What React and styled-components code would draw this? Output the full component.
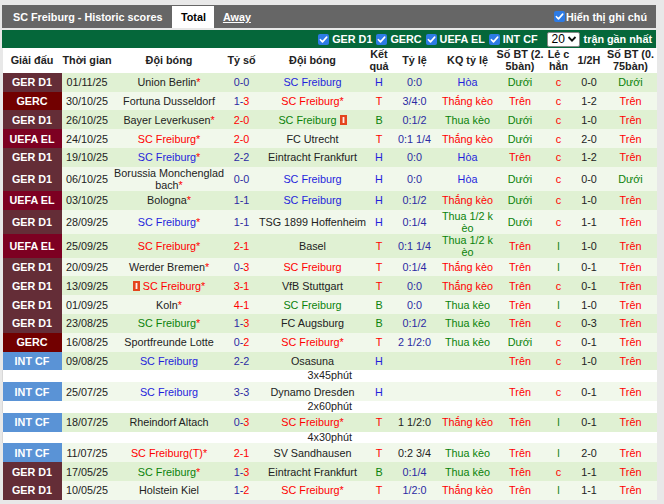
import React from 'react';
import styled, { createGlobalStyle } from 'styled-components';

const Global = createGlobalStyle`
  html, body { margin: 0; padding: 0; background: #e8e8e8; }
  body { font-family: "Liberation Sans", Arial, sans-serif; font-size: 10.8px; color: #222; }
`;

const C = {
  blue: '#1f1fdc',
  red: '#ff0000',
  green: '#0a820a',
  navy: '#2b2ba3',
  black: '#222222',
};

const LEAGUE_BG = {
  'GER D1': '#642d37',
  GERC: '#720000',
  'UEFA EL': '#7d0022',
  'INT CF': '#5a93d6',
};

const Page = styled.div`
  width: 654px;
  padding: 5px 0 0 2px;
`;

const TitleBar = styled.div`
  display: flex;
  align-items: stretch;
  height: 23px;
  background: #666666;
  color: #fff;
  font-weight: bold;
`;

const Title = styled.div`
  display: flex;
  align-items: center;
  padding: 0 10px 0 11px;
`;

const Tab = styled.div`
  display: flex;
  align-items: center;
  margin-top: 1px;
  padding: 0 8.5px;
  background: ${(p) => (p.$active ? '#fff' : 'transparent')};
  color: ${(p) => (p.$active ? '#000' : '#fff')};
  text-decoration: ${(p) => (p.$active ? 'none' : 'underline')};
`;

const Notes = styled.label`
  margin-left: auto;
  display: flex;
  align-items: center;
  gap: 1px;
  padding-right: 9px;
`;

const Box = styled.span`
  display: inline-flex;
  width: 11px;
  height: 11px;
  border-radius: 2px;
  background: #2d7be5;
  align-items: center;
  justify-content: center;
  flex: none;
`;

const Check = () => (
  <Box>
    <svg width="11" height="11" viewBox="0 0 11 11">
      <path d="M2.4 5.7 L4.5 7.9 L8.7 3.1" fill="none" stroke="#fff" strokeWidth="1.6" strokeLinecap="round" strokeLinejoin="round" />
    </svg>
  </Box>
);

const GreenBar = styled.div`
  margin-top: 2px;
  height: 18px;
  background: #05673a;
  display: flex;
  justify-content: flex-end;
  align-items: center;
  padding-right: 4px;
  color: #fff;
  font-weight: bold;
`;

const Filter = styled.span`
  display: flex;
  align-items: center;
  gap: 3px;
  margin-left: 4px;
`;

const Select = styled.span`
  margin: 0 4px 0 9px;
  width: 33px;
  height: 15px;
  box-sizing: border-box;
  background: #fff;
  border: 1px solid #888;
  border-radius: 2px;
  display: flex;
  align-items: center;
  justify-content: space-between;
  padding: 0 2px 0 4px;
  color: #000;
  font-weight: normal;
  font-size: 12px;
`;

const Table = styled.table`
  width: 654px;
  border-collapse: collapse;
  table-layout: fixed;
`;

const Th = styled.th`
  background: #fff;
  color: #222;
  font-weight: bold;
  line-height: 12.4px;
  padding: 0;
  text-align: center;
  vertical-align: middle;
  height: 24.7px;
`;

const Row = styled.tr`
  height: 18.8px;
  background: ${(p) => (p.$odd ? '#e0f1d3' : '#f1f8eb')};
`;

const Td = styled.td`
  padding: 0;
  text-align: center;
  vertical-align: middle;
  line-height: 12px;
  color: ${(p) => p.$c || C.black};
  white-space: nowrap;
`;

const League = styled.td`
  padding: 0;
  text-align: center;
  vertical-align: middle;
  line-height: 12px;
  color: #fff;
  font-weight: bold;
  background: ${(p) => LEAGUE_BG[p.$lg]};
`;

const ExtraRow = styled.tr`
  height: 11.8px;
  background: #fff;
`;

const ExtraCell = styled.td`
  padding: 0;
  text-align: center;
  line-height: 11.8px;
  color: #222;
  border-left: 1px solid #d8d8d8;
`;

const Star = styled.span`
  color: ${C.red};
`;

const Card = styled.svg`
  display: inline-block;
  vertical-align: -1px;
  margin: ${(p) => (p.$before ? '0 3px 0 0' : '0 0 0 3px')};
`;

const RedCard = ({ before }) => (
  <Card $before={before} width="7" height="10" viewBox="0 0 7 10">
    <rect x="0" y="0" width="7" height="10" fill="#e4451c" />
    <rect x="2.6" y="2" width="1.8" height="6" fill="#fff" opacity="0.9" />
  </Card>
);

const Team = ({ t }) => (
  <>
    {t.card === 'before' && <RedCard before />}
    <span style={{ color: t.c || C.black }}>{t.n}</span>
    {t.br && (
      <>
        <br />
        <span style={{ color: t.c || C.black }}>{t.br}</span>
      </>
    )}
    {t.s && <Star>*</Star>}
    {t.card === 'after' && <RedCard />}
  </>
);

const Score = ({ h, a }) => {
  if (h > a) return <span style={{ color: C.red }}>{`${h}-${a}`}</span>;
  if (h === a) return <span style={{ color: C.navy }}>{`${h}-${a}`}</span>;
  return (
    <>
      <span style={{ color: C.navy }}>{`${h}-`}</span>
      <span style={{ color: C.red }}>{a}</span>
    </>
  );
};

const RES_C = { H: C.blue, T: C.red, B: C.green };
const KQ_C = { 'Hòa': C.blue, 'Thắng kèo': C.red, 'Thua kèo': C.green, 'Thua 1/2 kèo': C.green };
const BT_C = { 'Trên': C.red, 'Dưới': C.green };
const LC_C = { c: C.red, l: C.green };

const F = (n, c, s, extra = {}) => ({ n, c, s, ...extra });
const SCF = 'SC Freiburg';

const rows = [
  ['GER D1', '01/11/25', F('Union Berlin', null, true), [0, 0], F(SCF, C.blue), 'H', '0:0', null, 'Hòa', 'Dưới', 'c', '0-0', 'Dưới'],
  ['GERC', '30/10/25', F('Fortuna Dusseldorf'), [1, 3], F(SCF, C.red, true), 'T', '3/4:0', null, 'Thắng kèo', 'Trên', 'c', '1-2', 'Trên'],
  ['GER D1', '26/10/25', F('Bayer Leverkusen', null, true), [2, 0], F(SCF, C.green, false, { card: 'after' }), 'B', '0:1/2', null, 'Thua kèo', 'Dưới', 'c', '1-0', 'Trên'],
  ['UEFA EL', '24/10/25', F(SCF, C.red, true), [2, 0], F('FC Utrecht'), 'T', '0:1 1/4', null, 'Thắng kèo', 'Dưới', 'c', '2-0', 'Trên'],
  ['GER D1', '19/10/25', F(SCF, C.blue, true), [2, 2], F('Eintracht Frankfurt'), 'H', '0:0', null, 'Hòa', 'Trên', 'c', '1-2', 'Trên'],
  ['GER D1', '06/10/25', F('Borussia Monchenglad', null, true, { br: 'bach' }), [0, 0], F(SCF, C.blue), 'H', '0:0', null, 'Hòa', 'Dưới', 'c', '0-0', 'Dưới'],
  ['UEFA EL', '03/10/25', F('Bologna', null, true), [1, 1], F(SCF, C.blue), 'H', '0:1/2', null, 'Thắng kèo', 'Dưới', 'c', '1-0', 'Trên'],
  ['GER D1', '28/09/25', F(SCF, C.blue, true), [1, 1], F('TSG 1899 Hoffenheim'), 'H', '0:1/4', null, 'Thua 1/2 kèo', 'Dưới', 'c', '1-1', 'Trên'],
  ['UEFA EL', '25/09/25', F(SCF, C.red, true), [2, 1], F('Basel'), 'T', '0:1 1/4', null, 'Thua 1/2 kèo', 'Trên', 'l', '1-0', 'Trên'],
  ['GER D1', '20/09/25', F('Werder Bremen', null, true), [0, 3], F(SCF, C.red), 'T', '0:1/4', null, 'Thắng kèo', 'Trên', 'l', '0-1', 'Trên'],
  ['GER D1', '13/09/25', F(SCF, C.red, true, { card: 'before' }), [3, 1], F('VfB Stuttgart'), 'T', '0:0', null, 'Thắng kèo', 'Trên', 'c', '0-1', 'Trên'],
  ['GER D1', '01/09/25', F('Koln', null, true), [4, 1], F(SCF, C.green), 'B', '0:0', null, 'Thua kèo', 'Trên', 'l', '1-0', 'Trên'],
  ['GER D1', '23/08/25', F(SCF, C.green, true), [1, 3], F('FC Augsburg'), 'B', '0:1/2', null, 'Thua kèo', 'Trên', 'c', '0-3', 'Trên'],
  ['GERC', '16/08/25', F('Sportfreunde Lotte'), [0, 2], F(SCF, C.red, true), 'T', '2 1/2:0', null, 'Thua kèo', 'Dưới', 'c', '0-1', 'Trên'],
  ['INT CF', '09/08/25', F(SCF, C.blue), [2, 2], F('Osasuna'), 'H', '', null, '', 'Trên', 'c', '1-0', 'Trên', '3x45phút'],
  ['INT CF', '25/07/25', F(SCF, C.blue), [3, 3], F('Dynamo Dresden'), 'H', '', null, '', 'Trên', 'c', '0-1', 'Trên', '2x60phút'],
  ['INT CF', '18/07/25', F('Rheindorf Altach'), [0, 3], F(SCF, C.red, true), 'T', '1 1/2:0', C.black, 'Thắng kèo', 'Trên', 'l', '0-1', 'Trên', '4x30phút'],
  ['INT CF', '11/07/25', F('SC Freiburg(T)', C.red, true), [2, 1], F('SV Sandhausen'), 'T', '0:2 3/4', C.black, 'Thua kèo', 'Trên', 'l', '2-0', 'Trên'],
  ['GER D1', '17/05/25', F(SCF, C.green, true), [1, 3], F('Eintracht Frankfurt'), 'B', '0:1/4', null, 'Thua kèo', 'Trên', 'c', '1-1', 'Trên'],
  ['GER D1', '10/05/25', F('Holstein Kiel'), [1, 2], F(SCF, C.red, true), 'T', '1/2:0', null, 'Thắng kèo', 'Trên', 'l', '1-1', 'Trên'],
];

const COLS = [59, 51, 113, 32, 110, 23, 48, 58, 47, 30, 31, 52];

const KqText = ({ v }) =>
  v === 'Thua 1/2 kèo' ? (
    <>
      Thua 1/2 k
      <br />
      èo
    </>
  ) : (
    v
  );

export default function App() {
  return (
    <>
      <Global />
      <Page>
        <TitleBar>
          <Title>SC Freiburg - Historic scores</Title>
          <Tab $active>Total</Tab>
          <Tab>Away</Tab>
          <Notes>
            <Check />
            Hiển thị ghi chú
          </Notes>
        </TitleBar>
        <GreenBar>
          {['GER D1', 'GERC', 'UEFA EL', 'INT CF'].map((l) => (
            <Filter key={l}>
              <Check />
              {l}
            </Filter>
          ))}
          <Select>
            20
            <svg width="10" height="8" viewBox="0 0 10 8">
              <path d="M1.5 2 L5 5.6 L8.5 2" fill="none" stroke="#111" strokeWidth="1.8" />
            </svg>
          </Select>
          trận gần nhất
        </GreenBar>
        <Table>
          <colgroup>
            {COLS.map((w, i) => (
              <col key={i} style={{ width: w }} />
            ))}
          </colgroup>
          <thead>
            <tr>
              <Th>Giải đấu</Th>
              <Th>Thời gian</Th>
              <Th>Đội bóng</Th>
              <Th>Tỷ số</Th>
              <Th>Đội bóng</Th>
              <Th>
                Kết
                <br />
                quả
              </Th>
              <Th>Tỷ lệ</Th>
              <Th>KQ tỷ lệ</Th>
              <Th>
                Số BT (2.
                <br />
                5bàn)
              </Th>
              <Th>
                Lẻ c
                <br />
                hẳn
              </Th>
              <Th>1/2H</Th>
              <Th>
                Số BT (0.
                <br />
                75bàn)
              </Th>
            </tr>
          </thead>
          <tbody>
            {rows.map((r, i) => {
              const [lg, date, home, sc, away, res, odds, oc, kq, bt, lc, ht, bt2, extra] = r;
              return (
                <React.Fragment key={i}>
                  <Row $odd={i % 2 === 0}>
                    <League $lg={lg}>{lg}</League>
                    <Td>{date}</Td>
                    <Td>
                      <Team t={home} />
                    </Td>
                    <Td>
                      <Score h={sc[0]} a={sc[1]} />
                    </Td>
                    <Td>
                      <Team t={away} />
                    </Td>
                    <Td $c={RES_C[res]}>{res}</Td>
                    <Td $c={oc || C.navy}>{odds}</Td>
                    <Td $c={KQ_C[kq]}>
                      <KqText v={kq} />
                    </Td>
                    <Td $c={BT_C[bt]}>{bt}</Td>
                    <Td $c={LC_C[lc]}>{lc}</Td>
                    <Td>{ht}</Td>
                    <Td $c={BT_C[bt2]}>{bt2}</Td>
                  </Row>
                  {extra && (
                    <ExtraRow>
                      <ExtraCell colSpan={12}>{extra}</ExtraCell>
                    </ExtraRow>
                  )}
                </React.Fragment>
              );
            })}
          </tbody>
        </Table>
      </Page>
    </>
  );
}
